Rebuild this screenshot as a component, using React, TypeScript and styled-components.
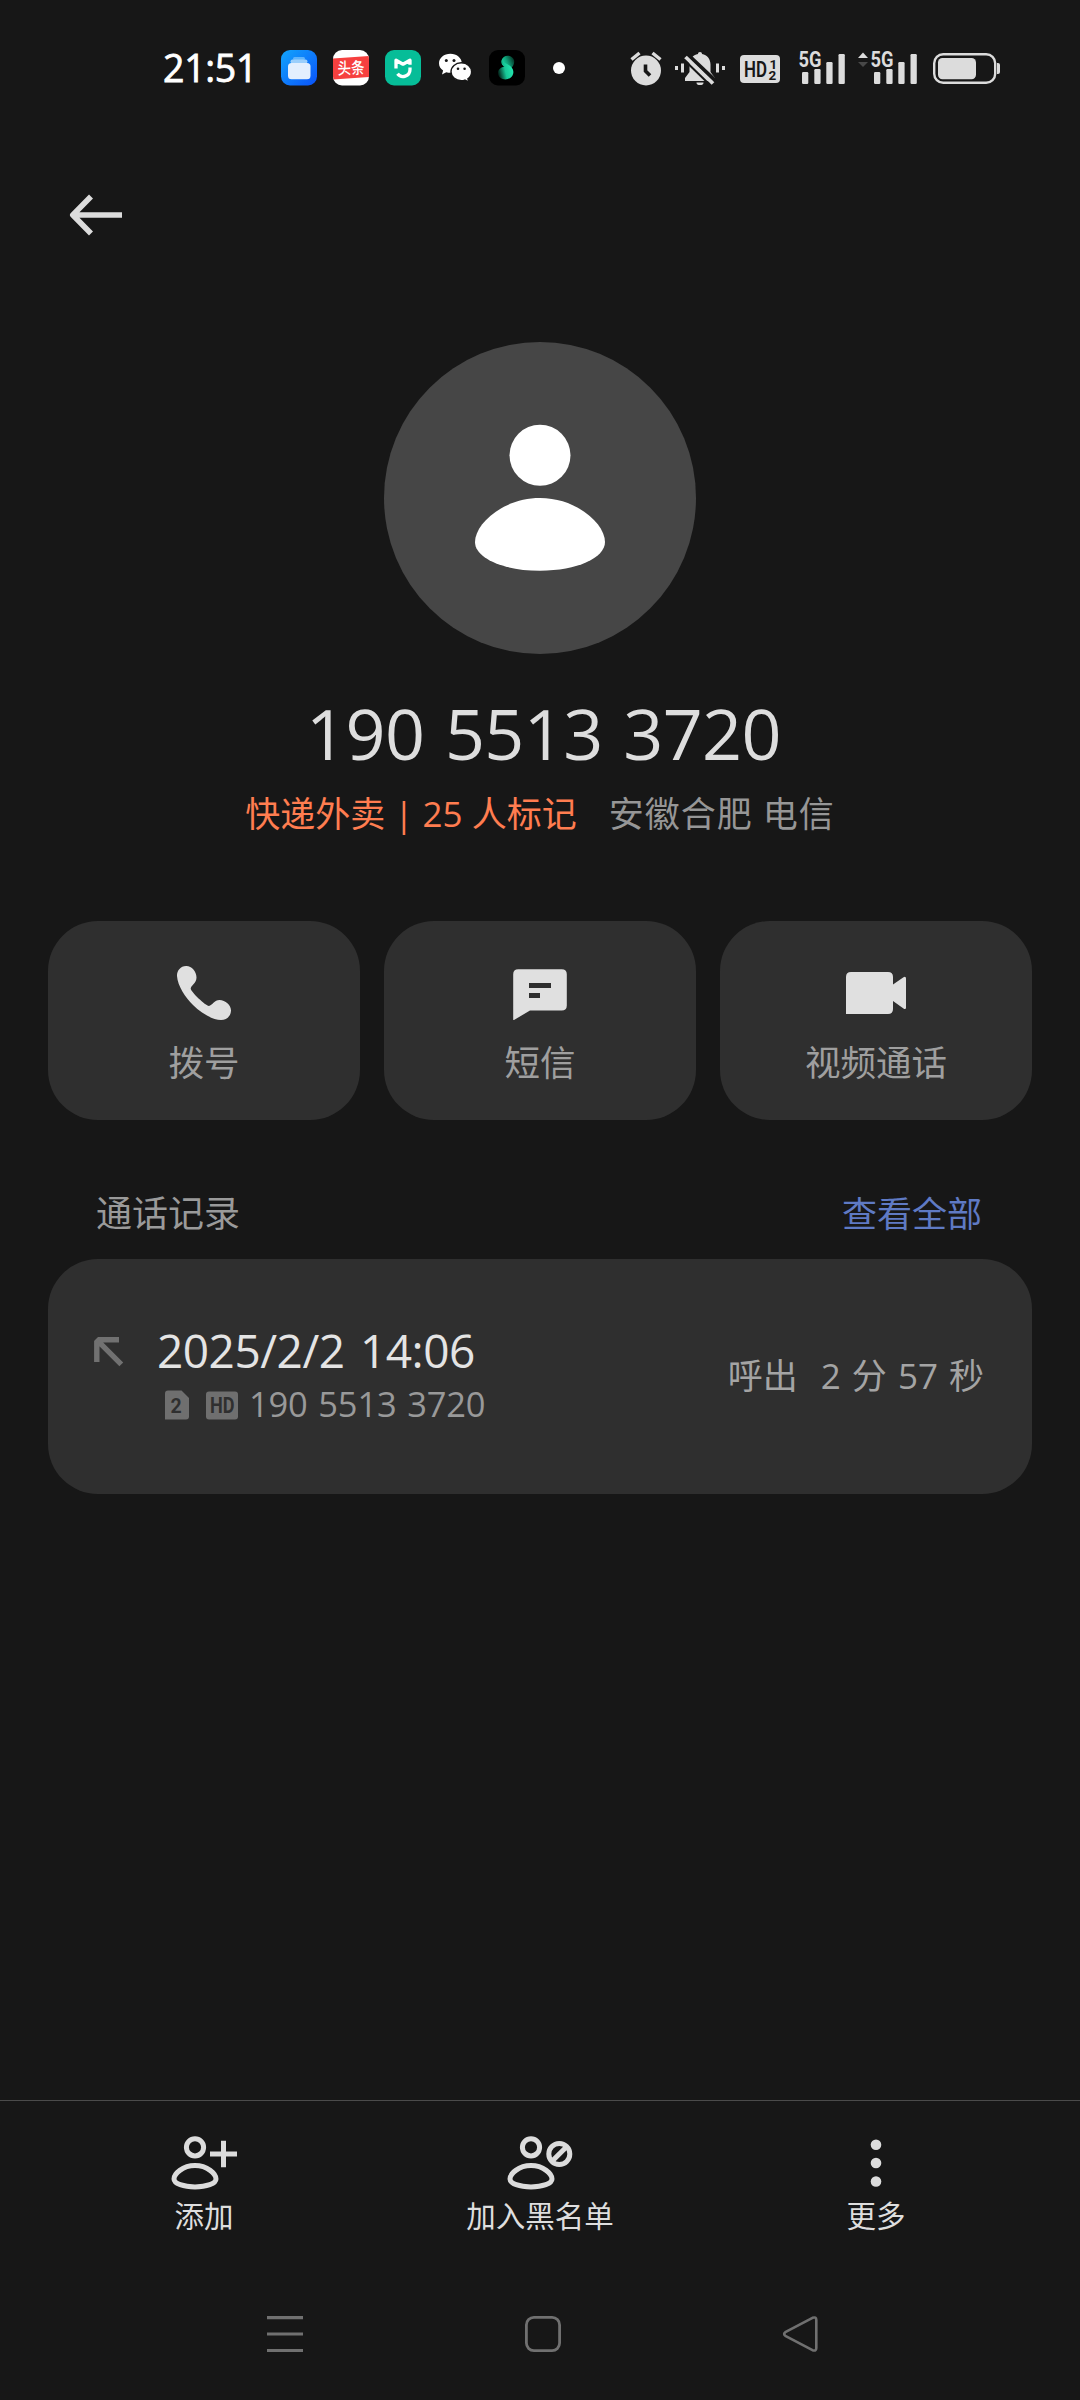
import React from "react";
import styled, { createGlobalStyle } from "styled-components";

const GlobalStyle = createGlobalStyle`
  * { box-sizing: border-box; }
  body {
    margin: 0;
    background: #171717;
    font-family: "Open Sans", "Noto Sans CJK SC", sans-serif;
    color: #dedede;
  }
  svg { display: block; flex: none; overflow: visible; }
`;

const Screen = styled.div`
  width: 1080px;
  height: 2400px;
  display: flex;
  flex-direction: column;
  background: #171717;
  overflow: hidden;
`;

/* ---------- status bar ---------- */
const StatusBar = styled.header`
  height: 136px;
  padding: 0 80px 0 163px;
  display: flex;
  align-items: center;
  flex: none;
`;
const Clock = styled.time`
  width: 118px;
  font-size: 37.5px;
  line-height: 50px;
  font-weight: 500;
  letter-spacing: -0.3px;
  -webkit-text-stroke: 0.8px #fff;
  color: #fff;
  white-space: nowrap;
`;
const AppIcons = styled.div`
  display: flex;
  align-items: center;
  gap: 16px;
`;
const MoreDot = styled.span`
  width: 12px;
  height: 12px;
  margin-left: 12px;
  border-radius: 50%;
  background: #fff;
`;
const SystemIcons = styled.div`
  margin-left: auto;
  display: flex;
  align-items: center;
`;
const Gap = styled.span<{ $w: number }>`
  width: ${(p) => p.$w}px;
`;

/* ---------- header ---------- */
const TopBar = styled.nav`
  height: 206px;
  padding: 56px 66px 0;
  flex: none;
`;
const BackButton = styled.button`
  display: block;
  padding: 0;
  border: 0;
  background: none;
`;

const Profile = styled.section`
  display: flex;
  flex-direction: column;
  align-items: center;
  height: 579px;
  flex: none;
`;
const Avatar = styled.div`
  width: 312px;
  height: 312px;
  border-radius: 50%;
  background: #464646;
`;
const PhoneNumber = styled.h1`
  margin: 31px 0 0;
  padding-left: 7px;
  font-size: 70px;
  line-height: 96px;
  font-weight: 400;
  letter-spacing: -0.6px;
  word-spacing: 3px;
  white-space: nowrap;
`;
const Tags = styled.p`
  margin: 9px 0 0;
  display: flex;
  gap: 32px;
  font-size: 35px;
  line-height: 48px;
  white-space: nowrap;
`;
const SpamTag = styled.span`
  color: #ff7d50;
`;
const Region = styled.span`
  color: #969696;
  letter-spacing: 1px;
`;

/* ---------- actions ---------- */
const Actions = styled.section`
  display: grid;
  grid-template-columns: repeat(3, 312px);
  gap: 24px;
  padding: 0 48px;
  flex: none;
`;
const ActionCard = styled.button`
  height: 199px;
  padding: 37px 0 0;
  border: 0;
  border-radius: 50px;
  background: #2f2f2f;
  color: #9f9f9f;
  font-family: inherit;
  display: flex;
  flex-direction: column;
  align-items: center;
`;
const ActionLabel = styled.span`
  margin-top: 10px;
  font-size: 35.5px;
  line-height: 48px;
`;

/* ---------- call log ---------- */
const LogHeader = styled.div`
  height: 139px;
  padding: 70px 98px 0 96px;
  display: flex;
  justify-content: space-between;
  font-size: 36px;
  line-height: 48px;
  flex: none;
`;
const LogTitle = styled.span`
  color: #9a9a9a;
`;
const ViewAll = styled.a`
  color: #5f7ac4;
  font-size: 35px;
`;
const LogCard = styled.article`
  height: 235px;
  margin: 0 48px;
  padding: 0 48px 0 46px;
  border-radius: 50px;
  background: #2f2f2f;
  display: flex;
  flex: none;
`;
const DirectionIcon = styled.div`
  width: 63px;
  padding-top: 78px;
`;
const LogInfo = styled.div`
  padding-top: 59px;
`;
const LogDate = styled.div`
  font-size: 46px;
  line-height: 64px;
  letter-spacing: -0.5px;
  word-spacing: 4px;
  color: #e4e4e4;
  white-space: nowrap;
`;
const LogMeta = styled.div`
  display: flex;
  align-items: center;
  height: 46px;
  padding-left: 8px;
`;
const LogNumber = styled.span`
  margin: -2px 0 0 11px;
  font-size: 34.5px;
  line-height: 44px;
  color: #999;
  letter-spacing: -0.2px;
  word-spacing: 2px;
  white-space: nowrap;
`;
const Duration = styled.div`
  margin-left: auto;
  padding-top: 93px;
  display: flex;
  gap: 23px;
  font-size: 35px;
  line-height: 48px;
  word-spacing: 2px;
  color: #a4a4a4;
  white-space: nowrap;
`;

/* ---------- bottom bars ---------- */
const Toolbar = styled.footer`
  height: 168px;
  margin-top: auto;
  padding: 32px 36px 0;
  border-top: 1px solid #4b4b4b;
  display: grid;
  grid-template-columns: repeat(3, 1fr);
  flex: none;
`;
const ToolButton = styled.button`
  padding: 0;
  border: 0;
  background: none;
  color: #dedede;
  font-family: inherit;
  display: flex;
  flex-direction: column;
  align-items: center;
`;
const ToolLabel = styled.span`
  margin-top: 3px;
  font-size: 29.5px;
  line-height: 40px;
`;
const NavBar = styled.nav`
  height: 132px;
  padding: 0 260px 0 265px;
  display: flex;
  justify-content: space-between;
  align-items: center;
  flex: none;
`;

const FG = "#dcdcdc";

const FilesIcon = () => (
  <svg width="36" height="36" viewBox="0 0 36 36">
    <defs>
      <linearGradient id="files" x1="0" y1="0" x2="1" y2="1">
        <stop offset="0" stopColor="#12a5fb" />
        <stop offset="1" stopColor="#0a52fa" />
      </linearGradient>
    </defs>
    <rect width="36" height="35.5" rx="9" fill="url(#files)" />
    <rect x="12" y="7" width="12" height="3" rx="1.5" fill="#5fb4fb" />
    <rect x="9.5" y="9.6" width="17" height="4" rx="2" fill="#9bcffc" />
    <rect x="7" y="13" width="22.5" height="16.3" rx="3.5" fill="#e3effe" />
  </svg>
);

const NewsIcon = () => (
  <svg width="36" height="36" viewBox="0 0 36 36">
    <defs>
      <clipPath id="news">
        <rect width="36" height="35.5" rx="9" />
      </clipPath>
    </defs>
    <g clipPath="url(#news)">
      <rect width="36" height="36" fill="#fff" />
      <path d="M0 8.5L36 6V27L0 29.5Z" fill="#f6403f" />
    </g>
    <text x="4.5" y="24" fontSize="16.5" fontWeight="500" fill="#fff" textLength="27" lengthAdjust="spacingAndGlyphs" fontFamily='"Noto Sans CJK SC", sans-serif' transform="rotate(-2 18 18)">
      头条
    </text>
  </svg>
);

const HomeAppIcon = () => (
  <svg width="36" height="36" viewBox="0 0 36 36">
    <rect width="36" height="35.5" rx="9" fill="#06bd98" />
    <path d="M11 18.500V10.200L18 14.200L25 10.200V14.800" fill="none" stroke="#fff" strokeWidth="3.300" strokeLinejoin="round" />
    <path d="M25 17.500V19.500A7 7 0 0 1 12.500 23.800" fill="none" stroke="#fff" strokeWidth="3.300" />
  </svg>
);

const ChatAppIcon = () => (
  <svg width="36" height="36" viewBox="0 0 36 36">
    <path d="M13.4 3.8C7 3.8 2 8 2 13.3c0 3 1.6 5.6 4.1 7.3L5 24.4l4.3-2.2c1.3.4 2.7.6 4.1.6C19.7 22.8 24.8 18.6 24.8 13.3S19.7 3.8 13.4 3.8Z" fill="#fff" />
    <path d="M24.3 12.8c-5.8 0-10.3 4-10.3 9 0 4.9 4.5 8.9 10.3 8.9 1.300 0 2.500-.2 3.600-.6l4 2-1-3.300c2.300-1.600 3.700-4.100 3.700-7 0-5-4.500-9-10.300-9Z" fill="#fff" stroke="#171717" strokeWidth="1.4" />
    <circle cx="9.3" cy="10.6" r="1.5" fill="#171717" />
    <circle cx="17" cy="10.6" r="1.5" fill="#171717" />
    <circle cx="21" cy="18.7" r="1.3" fill="#171717" />
    <circle cx="27.6" cy="18.7" r="1.3" fill="#171717" />
  </svg>
);

const SwirlIcon = () => (
  <svg width="36" height="36" viewBox="0 0 36 36">
    <defs>
      <linearGradient id="swirlA" x1="1" y1="0.2" x2="0" y2="0.7">
        <stop offset="0" stopColor="#042c20" />
        <stop offset="0.55" stopColor="#0fa57c" />
        <stop offset="1" stopColor="#1fe3ab" />
      </linearGradient>
      <linearGradient id="swirlB" x1="1" y1="0.3" x2="0" y2="0.6">
        <stop offset="0" stopColor="#25eab2" />
        <stop offset="0.55" stopColor="#17c797" />
        <stop offset="1" stopColor="#04241b" />
      </linearGradient>
    </defs>
    <rect width="36" height="35.5" rx="9" fill="#000" />
    <path d="M25 10C23 4.500 14 4 12.500 10.500c-1 5 4 7 7.500 9 3-1.500 6-5 5-9.500Z" fill="url(#swirlA)" />
    <path d="M9 23c.5 7.500 11 8.500 14.500 2.500 2.500-5-.5-9-5.500-11.500-2-1-4-2-4.500-4-1.500 3 .5 5.500 2.500 6.500-4 .5-7 3-7 6.500Z" fill="url(#swirlB)" />
  </svg>
);

const AlarmIcon = () => (
  <svg width="32" height="36" viewBox="0 0 32 36">
    <circle cx="16" cy="20.5" r="15" fill={FG} />
    <path d="M1.500 9.500L9.500 3M30.500 9.500L22.500 3" stroke={FG} strokeWidth="3.400" fill="none" />
    <path d="M15.500 14.500v6.500l4.500 4.500" stroke="#171717" strokeWidth="3.600" fill="none" />
  </svg>
);

const MutedBellIcon = () => (
  <svg width="50" height="36" viewBox="0 0 50 36">
    <path d="M1.500 16v4M7.500 13.500v9M42.500 13.500v9M48.500 16v4" stroke={FG} strokeWidth="3" fill="none" />
    <path d="M25 2c1.400 0 2 .7 2 2 5.200 1 8.500 5 8.500 10.500v7.500l4.500 6v3H10v-3l4.500-6v-7.500C14.500 9 17.800 5 23 4c0-1.300.6-2 2-2Z" fill={FG} />
    <path d="M21.500 32.500h7a3.500 2.600 0 0 1-7 0Z" fill={FG} />
    <path d="M12.500 4.500L40.500 31" stroke="#171717" strokeWidth="4" fill="none" />
    <path d="M10.500 7L38 33.500" stroke={FG} strokeWidth="3.800" fill="none" />
    <path d="M8.700 9.500L34 34" stroke="#171717" strokeWidth="2" fill="none" />
  </svg>
);

const HdDualIcon = () => (
  <svg width="40" height="36" viewBox="0 0 40 36">
    <rect x="0" y="5" width="40" height="28" rx="4" fill={FG} />
    <g fill="#171717" fontFamily="Roboto, sans-serif" fontWeight="700">
      <text x="4" y="26.5" fontSize="21.5" fontWeight="600" textLength="23" lengthAdjust="spacingAndGlyphs">HD</text>
      <text x="29.500" y="18.500" fontSize="13.500">1</text>
      <text x="28.500" y="30" fontSize="13.500">2</text>
    </g>
  </svg>
);

const SignalIcon = ({ arrows }: { arrows?: boolean }) => (
  <svg width={arrows ? 60 : 47} height="36" viewBox={arrows ? "-13 0 60 36" : "0 0 47 36"}>
    {arrows && (
      <>
        <path d="M-13 8L-8 2.500L-3 8Z" fill={FG} />
        <path d="M-13 12L-8 17L-3 12Z" fill="#484848" />
      </>
    )}
    <text x="-0.5" y="17.3" fontSize="21.5" fontWeight="700" fill={FG} fontFamily="Roboto, sans-serif" textLength="23" lengthAdjust="spacingAndGlyphs">5G</text>
    <g fill={FG}>
      <rect x="3" y="22" width="6.3" height="12" rx="1.2" />
      <rect x="15.3" y="19" width="6.3" height="15" rx="1.2" />
      <rect x="27.3" y="12" width="6.3" height="22" rx="1.2" />
      <rect x="39.5" y="4" width="6.3" height="30" rx="1.2" />
    </g>
  </svg>
);

const BatteryIcon = () => (
  <svg width="68" height="36" viewBox="0 0 68 36">
    <rect x="2.2" y="4.2" width="61" height="28.6" rx="9" fill="none" stroke={FG} strokeWidth="2.4" />
    <rect x="6" y="8" width="38" height="21.3" rx="4.5" fill={FG} />
    <path d="M65 13h1a2 2 0 0 1 2 2v7a2 2 0 0 1-2 2h-1Z" fill={FG} />
  </svg>
);

const BackIcon = () => (
  <svg width="60" height="46" viewBox="66 192 60 46">
    <path d="M122 215H74M91 196.5L72.8 215L91 233.5" fill="none" stroke={FG} strokeWidth="5.6" strokeLinejoin="round" />
  </svg>
);

const PersonIcon = () => (
  <svg width="312" height="312" viewBox="0 0 312 312">
    <circle cx="156" cy="113.3" r="30.5" fill="#fff" />
    <path d="M91 200C91 182 119 156 156 156S221 182 221 200C221 216 193 228.7 156 228.7S91 216 91 200Z" fill="#fff" />
  </svg>
);

const CallIcon = () => (
  <svg width="70" height="70" viewBox="0 0 70 70">
    <path d="M17 8C11.500 8.300 7.800 12.500 8 18c.6 10 8.500 21.500 16 29 8 8 19.500 15 28 15 5.700 0 9.700-3.800 10-9.200.3-5.300-5.500-10.800-11.500-10.800-5 0-7.500 5.500-10.500 6-3 .3-18.500-14.500-18.300-17.500.2-3 5.800-5.200 5.800-11C27.500 13.500 22.500 7.700 17 8Z" fill="#e0e0e0" />
  </svg>
);

const MessageIcon = () => (
  <svg width="70" height="70" viewBox="505 958 70 70">
    <path fillRule="evenodd" d="M518.3 969.2H561.7Q566.8 969.2 566.8 974.3V1005.4Q566.8 1010.5 561.7 1010.5H530L514 1020Q513.2 1020.3 513.2 1019.5V974.3Q513.2 969.2 518.3 969.2ZM529 983V988H551V983ZM529 993V998H540V993Z" fill="#e0e0e0" />
  </svg>
);

const VideoIcon = () => (
  <svg width="70" height="70" viewBox="841 958 70 70">
    <path d="M851 972H888Q893 972 893 977V984.5L903.5 977.2Q906 976 906 978.5V1007.500Q906 1010 903.500 1008.500L893 1001V1009Q893 1014 888 1014H846V977Q846 972 851 972Z" fill="#e0e0e0" />
  </svg>
);

const DirectionArrow = () => (
  <svg width="30" height="30" viewBox="0 0 30 30">
    <path d="M25 2.8H2.8V25M2.8 2.8L27.3 27.3" fill="none" stroke="#717171" strokeWidth="5.4" />
    <path d="M0 0h4L0 4Z" fill="#2f2f2f" />
  </svg>
);

const SimIcon = () => (
  <svg width="24" height="30" viewBox="0 0 24 30">
    <path d="M3 0.500H16.500L24 8V26.500Q24 29.500 21 29.500H0V3.500Q0 0.500 3 0.500Z" fill="#6f6f6f" />
    <text x="11" y="22.500" textAnchor="middle" fontSize="19.500" fontWeight="700" fill="#2f2f2f" fontFamily="Roboto, sans-serif">2</text>
  </svg>
);

const HdIcon = () => (
  <svg width="32" height="30" viewBox="0 0 32 30">
    <rect y="1.5" width="32" height="28" rx="3" fill="#6f6f6f" />
    <text x="4" y="23.300" fontSize="22" fontWeight="700" fill="#2f2f2f" fontFamily="Roboto, sans-serif" textLength="24.500" lengthAdjust="spacingAndGlyphs">HD</text>
  </svg>
);

const PersonOutline = () => (
  <>
    <circle cx="27" cy="14.3" r="8.6" />
    <path d="M6 46C6 41 14.500 32.500 27 32.500S48 41 48 46C48 50.500 38.500 54 27 54S6 50.500 6 46Z" />
  </>
);

const AddPersonIcon = () => (
  <svg width="72" height="60" viewBox="0 0 72 60" fill="none" stroke={FG} strokeWidth="5">
    <PersonOutline />
    <path d="M42 21H69M55.5 7.8V34.3" />
  </svg>
);

const BlockPersonIcon = () => (
  <svg width="72" height="60" viewBox="0 0 72 60" fill="none" stroke={FG} strokeWidth="5">
    <PersonOutline />
    <circle cx="55.3" cy="21" r="10.5" />
    <path d="M48 28.3L62.6 13.7" />
  </svg>
);

const MoreIcon = () => (
  <svg width="72" height="60" viewBox="0 0 72 60" fill={FG}>
    <circle cx="36" cy="11.7" r="5.3" />
    <circle cx="36" cy="30" r="5.3" />
    <circle cx="36" cy="48.5" r="5.3" />
  </svg>
);

const RecentsIcon = () => (
  <svg width="40" height="40" viewBox="0 0 40 40">
    <path d="M2 3.7H38M2 20H38M2 36.5H38" stroke="#707070" strokeWidth="3.2" />
  </svg>
);
const HomeIcon = () => (
  <svg width="40" height="40" viewBox="0 0 40 40">
    <rect x="3.4" y="3.4" width="33.2" height="33.2" rx="7.5" fill="none" stroke="#707070" strokeWidth="2.8" />
  </svg>
);
const NavBackIcon = () => (
  <svg width="40" height="40" viewBox="0 0 40 40">
    <path d="M5.3 18.2L32.5 3.8Q36.3 2.5 36.3 6V34Q36.3 37.5 32.5 36.2L5.3 21.8Q3 20 5.3 18.2Z" fill="none" stroke="#707070" strokeWidth="2.6" strokeLinejoin="round" />
  </svg>
);

const actions = [
  { label: "拨号", Icon: CallIcon },
  { label: "短信", Icon: MessageIcon },
  { label: "视频通话", Icon: VideoIcon },
];

const tools = [
  { label: "添加", Icon: AddPersonIcon },
  { label: "加入黑名单", Icon: BlockPersonIcon },
  { label: "更多", Icon: MoreIcon },
];

export default function App() {
  return (
    <>
      <GlobalStyle />
      <Screen>
        <StatusBar>
          <Clock>21:51</Clock>
          <AppIcons>
            <FilesIcon />
            <NewsIcon />
            <HomeAppIcon />
            <ChatAppIcon />
            <SwirlIcon />
            <MoreDot />
          </AppIcons>
          <SystemIcons>
            <AlarmIcon />
            <Gap $w={13} />
            <MutedBellIcon />
            <Gap $w={15} />
            <HdDualIcon />
            <Gap $w={19} />
            <SignalIcon />
            <Gap $w={12} />
            <SignalIcon arrows />
            <Gap $w={14} />
            <BatteryIcon />
          </SystemIcons>
        </StatusBar>

        <TopBar>
          <BackButton aria-label="返回">
            <BackIcon />
          </BackButton>
        </TopBar>

        <Profile>
          <Avatar>
            <PersonIcon />
          </Avatar>
          <PhoneNumber>190 5513 3720</PhoneNumber>
          <Tags>
            <SpamTag>快递外卖 | 25 人标记</SpamTag>
            <Region>安徽合肥 电信</Region>
          </Tags>
        </Profile>

        <Actions>
          {actions.map(({ label, Icon }) => (
            <ActionCard key={label}>
              <Icon />
              <ActionLabel>{label}</ActionLabel>
            </ActionCard>
          ))}
        </Actions>

        <LogHeader>
          <LogTitle>通话记录</LogTitle>
          <ViewAll>查看全部</ViewAll>
        </LogHeader>
        <LogCard>
          <DirectionIcon>
            <DirectionArrow />
          </DirectionIcon>
          <LogInfo>
            <LogDate>2025/2/2 14:06</LogDate>
            <LogMeta>
              <SimIcon />
              <Gap $w={17} />
              <HdIcon />
              <LogNumber>190 5513 3720</LogNumber>
            </LogMeta>
          </LogInfo>
          <Duration>
            <span>呼出</span>
            <span>2 分 57 秒</span>
          </Duration>
        </LogCard>

        <Toolbar>
          {tools.map(({ label, Icon }) => (
            <ToolButton key={label}>
              <Icon />
              <ToolLabel>{label}</ToolLabel>
            </ToolButton>
          ))}
        </Toolbar>
        <NavBar>
          <RecentsIcon />
          <HomeIcon />
          <NavBackIcon />
        </NavBar>
      </Screen>
    </>
  );
}
